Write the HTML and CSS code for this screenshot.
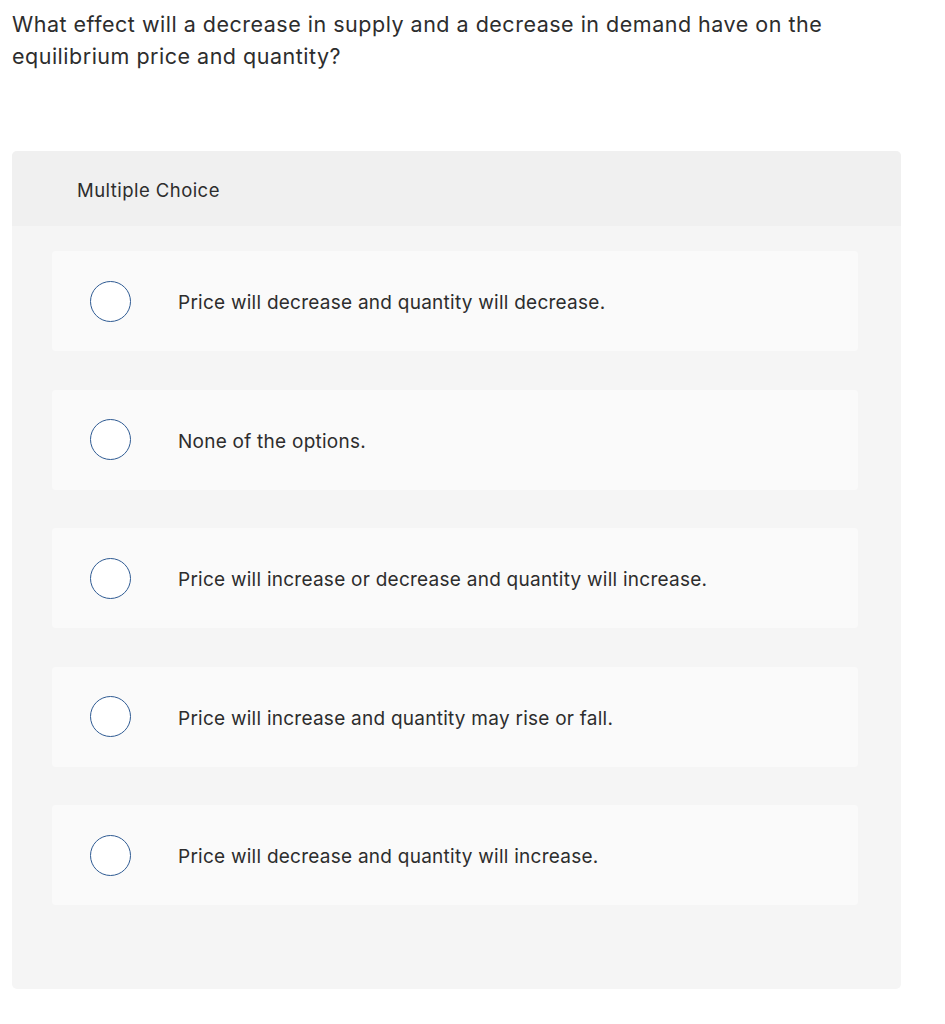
FILE: index.html
```html
<!DOCTYPE html>
<html>
<head>
<meta charset="utf-8">
<link rel="stylesheet" href="styles.css">
</head>
<body>
<div class="page">
  <p class="question">What effect will a decrease in supply and a decrease in demand have on the equilibrium price and quantity?</p>
  <div class="panel">
    <div class="panel-head">Multiple Choice</div>
    <div class="options">
      <div class="option"><span class="radio"></span><span class="label">Price will decrease and quantity will decrease.</span></div>
      <div class="option"><span class="radio"></span><span class="label">None of the options.</span></div>
      <div class="option"><span class="radio"></span><span class="label">Price will increase or decrease and quantity will increase.</span></div>
      <div class="option"><span class="radio"></span><span class="label">Price will increase and quantity may rise or fall.</span></div>
      <div class="option"><span class="radio"></span><span class="label">Price will decrease and quantity will increase.</span></div>
    </div>
  </div>
</div>
</body>
</html>
```
FILE: styles.css
```css
html, body { margin: 0; padding: 0; background: #fff; }
body { font-family: Inter, "Open Sans", sans-serif; color: #2d2d2d; }
.page { padding: 8px 44px 0 12px; }
.question { margin: 0; font-size: 21.5px; letter-spacing: 0.5px; line-height: 32px; width: 840px; }
.panel { margin-top: 79px; width: 889px; background: #f5f5f5; border-radius: 5px; overflow: hidden; padding-bottom: 84px; }
.panel-head { background: #f0f0f0; height: 75px; display: flex; align-items: center; padding-left: 65px; padding-top: 2px; box-sizing: border-box; font-size: 18.5px; letter-spacing: 0.45px; }
.options { display: flex; flex-direction: column; gap: 38.5px; padding: 25px 43px 0 40px; }
.option { height: 100px; background: #fafafa; border-radius: 4px; display: flex; align-items: center; }
.radio { width: 39px; height: 39px; border: 1.7px solid #2f5b93; border-radius: 50%; background: #fff; margin-left: 38px; flex: none; }
.label { margin-left: 47px; padding-top: 3px; font-size: 19px; letter-spacing: 0.25px; }
```
